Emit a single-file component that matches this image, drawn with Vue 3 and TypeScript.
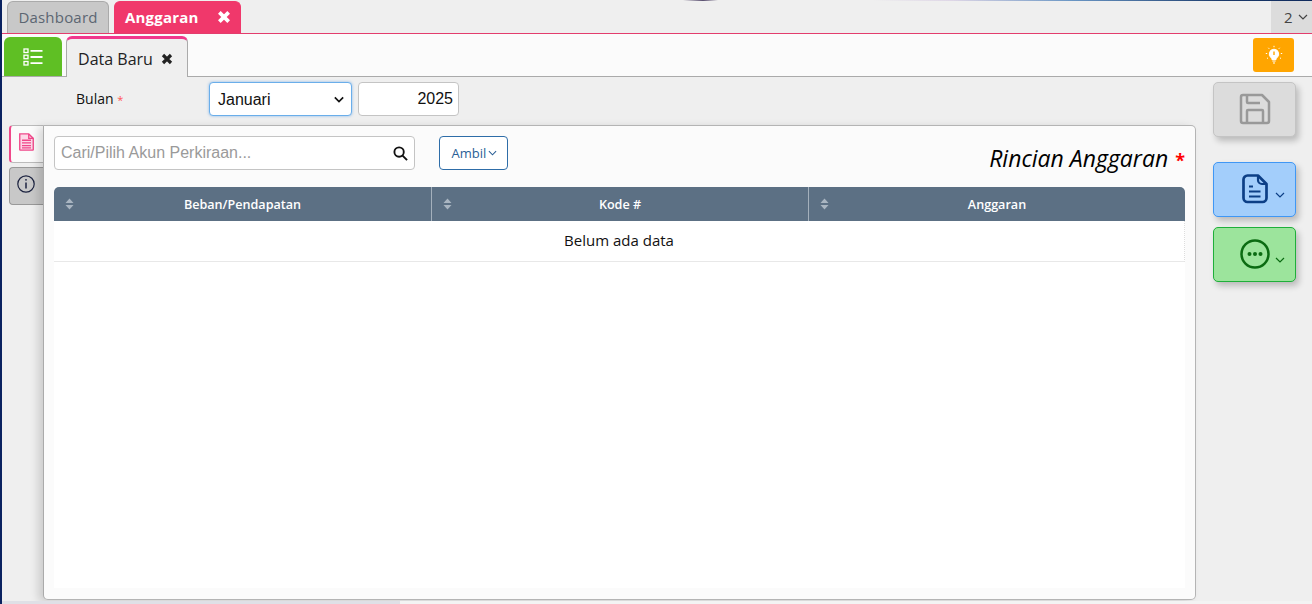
<template>
  <div class="page">
    <div class="topbar">
      <div class="tab-main">Dashboard</div>
      <div class="tab-main active">
        Anggaran
        <svg class="x" viewBox="0 0 12 12" width="14" height="14"><path d="M2 2l8 8M10 2l-8 8" /></svg>
      </div>
      <div class="tab-count">
        2
        <svg viewBox="0 0 10 6" width="10" height="6"><path d="M1 1l4 4 4-4" /></svg>
      </div>
    </div>

    <div class="subbar">
      <button class="menu-btn">
        <svg viewBox="0 0 20 18" width="20" height="18" fill="none" stroke="#fff">
          <rect x="1" y="1" width="4" height="3.500" stroke-width="1.300" />
          <rect x="1" y="7.200" width="4" height="3.500" stroke-width="1.300" />
          <rect x="1" y="13.500" width="4" height="3.500" stroke-width="1.300" />
          <path d="M7.500 2.800h12M7.500 9h12M7.500 15.200h12" stroke-width="1.800" />
        </svg>
      </button>
      <div class="tab-sub">
        Data Baru
        <svg class="x dark" viewBox="0 0 12 12" width="12" height="12"><path d="M2 2l8 8M10 2l-8 8" /></svg>
      </div>
      <button class="hint-btn">
        <svg viewBox="0 0 20 20" width="20" height="20" fill="none" stroke="#fff">
          <path d="M10 4.200a4.800 4.800 0 0 0-3 8.500c.6.500.9 1.100.9 1.800h4.200c0-.7.300-1.300.9-1.800a4.800 4.800 0 0 0-3-8.500z" fill="#fff" stroke-width="1" />
          <path d="M8.300 16h3.400M9 18h2" stroke-width="1.200" />
          <path d="M10 6.500v3.500" stroke="#ffa500" stroke-width="1.400" />
          <path d="M10 .8v1.400M4.300 2.800l.9 1M15.700 2.800l-.9 1M1.800 8.500h1.400M16.800 8.500h1.400M3 13.500l1-.6M17 13.500l-1-.6" stroke-width="1" />
        </svg>
      </button>
    </div>

    <div class="body">
      <div class="center">
        <div class="form-row">
          <label class="field-label">Bulan <span class="req">*</span></label>
          <div class="select-box">
            <span class="select-text">Januari</span>
            <svg viewBox="0 0 12 8" width="10" height="7"><path d="M1 1.500l5 5 5-5" /></svg>
          </div>
          <div class="year-box">2025</div>
        </div>

        <div class="panel-wrap">
          <div class="side-tabs">
            <div class="side-tab active">
              <svg viewBox="0 0 18 20" width="17" height="18" fill="none" stroke="#f0488a" stroke-width="1.500">
                <path d="M1.500 1h10l5 5v12.500a.5.5 0 0 1-.5.5H2a.5.5 0 0 1-.5-.5z" fill="#fdd9e8" />
                <path d="M11.500 1v5h5M4 8h10M4 11h10M4 14h10M4 16.500h10" />
              </svg>
            </div>
            <div class="side-tab">
              <svg viewBox="0 0 18 18" width="18" height="18" fill="none" stroke="#1c2340" stroke-width="1.200">
                <circle cx="9" cy="9" r="8.200" />
                <path d="M9 7.500v6" stroke-width="1.500" />
                <circle cx="9" cy="4.800" r="0.900" fill="#1c2340" stroke="none" />
              </svg>
            </div>
          </div>

          <div class="panel">
            <div class="toolbar">
              <div class="search-box">
                <span class="placeholder">Cari/Pilih Akun Perkiraan...</span>
                <svg viewBox="0 0 16 16" width="15" height="15" fill="none" stroke="#111" stroke-width="2">
                  <circle cx="6.500" cy="6.500" r="5" />
                  <path d="M10.200 10.200L15 15" />
                </svg>
              </div>
              <button class="fetch-btn">
                Ambil
                <svg viewBox="0 0 10 6" width="9" height="6"><path d="M1 1l4 4 4-4" /></svg>
              </button>
              <div class="panel-title">Rincian Anggaran <span class="title-req">*</span></div>
            </div>

            <div class="table">
              <div class="thead">
                <div v-for="col in columns" :key="col" class="th">
                  <svg class="sort" viewBox="0 0 8 12" width="9" height="12">
                    <path d="M4 0.500L8 5H0zM4 11.500L0 7h8z" />
                  </svg>
                  {{ col }}
                </div>
              </div>
              <div class="empty-row">Belum ada data</div>
              <div class="tbody-fill"></div>
            </div>
          </div>
        </div>
      </div>

      <div class="actions">
        <button class="act save">
          <svg viewBox="0 0 32 32" width="32" height="32" fill="none" stroke="#999" stroke-width="2.500" stroke-linejoin="round">
            <path d="M4 2h19l7 7v19a2 2 0 0 1-2 2H4a2 2 0 0 1-2-2V4a2 2 0 0 1 2-2z" />
            <path d="M8 2v7a1 1 0 0 0 1 1h12M8 30V18a1 1 0 0 1 1-1h14a1 1 0 0 1 1 1v12" />
          </svg>
        </button>
        <button class="act doc">
          <svg viewBox="0 0 26 30" width="26" height="30" fill="none" stroke="#0c3f86" stroke-width="2.700" stroke-linejoin="round">
            <path d="M5.500 1.500h10.500l8.500 8.500v14a4 4 0 0 1-4 4h-15a4 4 0 0 1-4-4V5.500a4 4 0 0 1 4-4z" />
            <path d="M16 1.500v4.500a4 4 0 0 0 4 4h4.500M7 12.500h4M7 17.500h11.500M7 22.500h11.500" stroke-width="2.200" />
          </svg>
          <svg class="caret" viewBox="0 0 10 6" width="10" height="6"><path d="M1 1l4 4 4-4" /></svg>
        </button>
        <button class="act more">
          <svg viewBox="0 0 30 30" width="30" height="30" fill="none" stroke="#0b6b12" stroke-width="2.500">
            <circle cx="15" cy="15" r="13.500" />
            <circle cx="9.500" cy="15" r="2" fill="#0b6b12" stroke="none" />
            <circle cx="15" cy="15" r="2" fill="#0b6b12" stroke="none" />
            <circle cx="20.500" cy="15" r="2" fill="#0b6b12" stroke="none" />
          </svg>
          <svg class="caret" viewBox="0 0 10 6" width="10" height="6"><path d="M1 1l4 4 4-4" /></svg>
        </button>
      </div>
    </div>

    <div class="scroll-strip"><div class="scroll-thumb"></div></div>
  </div>
</template>

<script setup lang="ts">
const columns: string[] = ['Beban/Pendapatan', 'Kode #', 'Anggaran']
</script>

<style>
html,
body {
  margin: 0;
  overflow: hidden;
}
</style>

<style scoped>
.page {
  width: 1312px;
  height: 604px;
  box-sizing: border-box;
  border-left: 2px solid #0a2260;
  background: #efefef;
  display: flex;
  flex-direction: column;
  font-family: 'Open Sans', 'Noto Sans', sans-serif;
  color: #111;
  overflow: hidden;
}

button {
  font-family: inherit;
  padding: 0;
  cursor: pointer;
}

.topbar {
  height: 34px;
  flex: none;
  box-sizing: border-box;
  border-bottom: 1px solid #e33d6d;
  /* thin strip of the page behind, only the top row of pixels shows */
  background: linear-gradient(
      to right,
      transparent 681px,
      #5a4f70 701px,
      transparent 716px,
      transparent 870px,
      #ded6e6 950px,
      #6a96c4 1070px,
      #1b3b6c 1220px,
      #0f2a5c 1310px
    )
    no-repeat 0 0 / 100% 1px;
  display: flex;
  align-items: flex-end;
  padding-left: 5px;
  gap: 5px;
}

.tab-main {
  height: 32px;
  width: 102px;
  box-sizing: border-box;
  background: #c8c8c8;
  border: 1px solid #aaa;
  border-bottom: none;
  border-radius: 6px 6px 0 0;
  color: #5c6672;
  font-size: 15px;
  letter-spacing: 0.2px;
  padding-bottom: 2px;
  display: flex;
  align-items: center;
  justify-content: center;
}

.tab-main.active {
  width: 127px;
  background: #f0386b;
  border-color: #f0386b;
  color: #fff;
  font-weight: 700;
  justify-content: flex-start;
  padding-left: 10px;
}

.x {
  stroke: #fff;
  stroke-width: 3.200;
  margin-left: auto;
  margin-right: 9px;
}

.x.dark {
  stroke: #222;
  margin: 0 0 0 8px;
}

.tab-count {
  margin-left: auto;
  width: 41px;
  height: 32px;
  box-sizing: border-box;
  padding-left: 13px;
  background: #dcdcdc;
  color: #444;
  font-size: 15px;
  display: flex;
  align-items: center;
  gap: 5px;
}

.tab-count svg,
.fetch-btn svg,
.caret {
  fill: none;
  stroke: currentColor;
  stroke-width: 1.200;
}

.subbar {
  height: 43px;
  flex: none;
  box-sizing: border-box;
  background: #fbfbfb;
  border-bottom: 1px solid #aaa;
  display: flex;
  align-items: flex-end;
  padding-left: 2px;
}

.menu-btn {
  width: 58px;
  height: 39px;
  border: none;
  border-radius: 6px 6px 0 0;
  background: #5fbf24;
  display: flex;
  align-items: center;
  justify-content: center;
}

.tab-sub {
  margin-left: 4px;
  margin-bottom: -1px;
  width: 122px;
  height: 41px;
  box-sizing: border-box;
  background: #efefef;
  border: 1px solid #aaa;
  border-top: 3px solid #f0388c;
  border-bottom: none;
  border-radius: 6px 6px 0 0;
  padding: 2px 3px 0 0;
  font-size: 16px;
  color: #222;
  display: flex;
  align-items: center;
  justify-content: center;
}

.hint-btn {
  margin-left: auto;
  margin-right: 18px;
  margin-bottom: 4px;
  width: 41px;
  height: 34px;
  border: none;
  border-radius: 3px;
  background: #ffa500;
  display: flex;
  align-items: center;
  justify-content: center;
}

.body {
  flex: 1;
  min-height: 0;
  display: flex;
}

.center {
  width: 1194px;
  flex: none;
  display: flex;
  flex-direction: column;
}

.form-row {
  height: 34px;
  margin-top: 5px;
  flex: none;
  display: flex;
  align-items: center;
  padding-left: 74px;
}

.field-label {
  width: 133px;
  font-size: 14px;
  color: #111;
  padding-bottom: 2px;
}

.req {
  color: #f55;
  font-size: 11px;
}

.select-box {
  width: 143px;
  height: 34px;
  box-sizing: border-box;
  background: #fff;
  border: 1px solid #6aaeea;
  border-radius: 4px;
  box-shadow: 0 0 3px rgba(70, 150, 230, 0.6);
  padding: 0 7px 0 8px;
  font-family: 'Liberation Sans', Arial, sans-serif;
  font-size: 16px;
  display: flex;
  align-items: center;
  justify-content: space-between;
}

.select-text {
  padding-top: 2px;
}

.select-box svg {
  fill: none;
  stroke: #111;
  stroke-width: 2;
}

.year-box {
  margin-left: 6px;
  width: 101px;
  height: 34px;
  box-sizing: border-box;
  background: #fff;
  border: 1px solid #c4c4c4;
  border-radius: 4px;
  padding: 0 5px 1px 0;
  font-family: 'Liberation Sans', Arial, sans-serif;
  font-size: 16px;
  display: flex;
  align-items: center;
  justify-content: flex-end;
}

.panel-wrap {
  flex: 1;
  min-height: 0;
  margin-top: 9px;
  display: flex;
  padding-left: 7px;
}

.side-tabs {
  width: 34px;
  flex: none;
  display: flex;
  flex-direction: column;
  gap: 4px;
}

.side-tab {
  height: 38px;
  box-sizing: border-box;
  background: #c8c8c8;
  border: 1px solid #999;
  border-right: none;
  border-radius: 4px 0 0 4px;
  display: flex;
  align-items: center;
  justify-content: center;
  padding-right: 1px;
  padding-bottom: 4px;
}

.side-tab.active {
  background: #fbfbfb;
  border: none;
  border-left: 2px solid #f0488a;
  border-top: 1px solid #bbb;
  border-bottom: 1px solid #bbb;
}

.panel {
  flex: 1;
  min-width: 0;
  box-sizing: border-box;
  background: #fbfbfb;
  border: 1px solid #b4b4b4;
  border-left-color: #aaa;
  border-radius: 0 5px 5px 5px;
  box-shadow: -5px 2px 8px rgba(0, 0, 0, 0.14);
  padding: 10px 10px 11px 10px;
  display: flex;
  flex-direction: column;
  margin-bottom: 1px;
}

.toolbar {
  height: 34px;
  flex: none;
  display: flex;
  align-items: flex-start;
}

.search-box {
  width: 361px;
  height: 34px;
  box-sizing: border-box;
  background: #fff;
  border: 1px solid #c4c4c4;
  border-radius: 4px;
  padding: 0 6px 0 6px;
  display: flex;
  align-items: center;
  justify-content: space-between;
}

.placeholder {
  font-family: 'Liberation Sans', Arial, sans-serif;
  font-size: 16px;
  color: #9a9a9a;
}

.fetch-btn {
  margin-left: 24px;
  width: 69px;
  height: 34px;
  box-sizing: border-box;
  background: #fff;
  border: 1px solid #2e6da8;
  border-radius: 4px;
  color: #2a5f96;
  font-size: 13px;
  padding-left: 2px;
  display: flex;
  align-items: center;
  justify-content: center;
  gap: 2px;
}

.panel-title {
  margin-left: auto;
  font-size: 23px;
  font-style: italic;
  line-height: 44px;
  color: #000;
  white-space: nowrap;
}

.title-req {
  color: #f00;
  font-size: 18px;
  font-style: normal;
  font-weight: 700;
  margin-left: 1px;
}

.table {
  flex: 1;
  min-height: 0;
  margin-top: 17px;
  display: flex;
  flex-direction: column;
  background: #fff;
}

.thead {
  height: 34px;
  flex: none;
  background: #5c7084;
  border-radius: 5px 5px 0 0;
  display: grid;
  grid-template-columns: 378px 377px 376px;
}

.th {
  position: relative;
  border-right: 1px solid #a4b0bc;
  color: #fff;
  font-size: 12.600px;
  font-weight: 600;
  display: flex;
  align-items: center;
  justify-content: center;
}

.th:last-child {
  border-right: none;
}

.sort {
  position: absolute;
  left: 11px;
  top: 11px;
  fill: #a9b5c1;
}

.empty-row {
  height: 41px;
  flex: none;
  box-sizing: border-box;
  border-bottom: 1px solid #e8e8e8;
  border-right: 1px dotted #ddd;
  padding-bottom: 2px;
  font-size: 15px;
  color: #111;
  display: flex;
  align-items: center;
  justify-content: center;
}

.tbody-fill {
  flex: 1;
}

.actions {
  flex: 1;
  display: flex;
  flex-direction: column;
  align-items: flex-start;
  padding: 5px 0 0 17px;
}

.act {
  width: 83px;
  height: 55px;
  box-sizing: border-box;
  border-radius: 5px;
  box-shadow: 3px 4px 6px rgba(0, 0, 0, 0.22);
  display: flex;
  align-items: center;
  justify-content: center;
  position: relative;
  padding-bottom: 2px;
}

.act.save {
  background: #dcdcdc;
  border: 1px solid #c4c4c4;
  margin-bottom: 25px;
}

.act.doc {
  background: #a3cefb;
  border: 1px solid #3f97f5;
  color: #0c3f86;
  margin-bottom: 10px;
}

.act.more {
  background: #9ce49c;
  border: 1px solid #1faf3a;
  color: #0b6b12;
}

.caret {
  position: absolute;
  right: 10px;
  top: 29px;
}

.scroll-strip {
  height: 3px;
  flex: none;
  background: #f3f3f3;
}

.scroll-thumb {
  width: 398px;
  height: 3px;
  background: #dfe0e6;
}
</style>
